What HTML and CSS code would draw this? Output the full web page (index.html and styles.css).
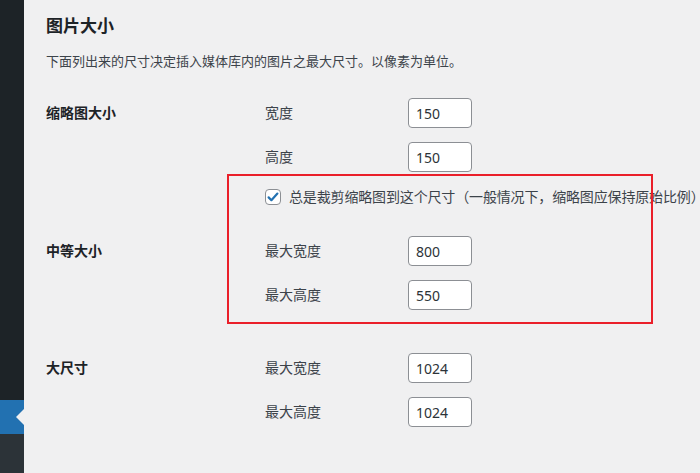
FILE: index.html
```html
<!DOCTYPE html>
<html lang="zh-CN">
<head>
    <meta charset="UTF-8">
    <meta name="viewport" content="width=device-width, initial-scale=1.0">
    <title>媒体设置</title>
    <link rel="stylesheet" href="styles.css">
</head>
<body>
    <div class="admin">
        <nav class="sidebar">
            <div class="menu-top"></div>
            <div class="menu-current"></div>
            <div class="menu-rest"></div>
        </nav>

        <main class="content">
            <h2>图片大小</h2>
            <p class="description">下面列出来的尺寸决定插入媒体库内的图片之最大尺寸。以像素为单位。</p>

            <div class="settings">
                <!-- 缩略图 -->
                <div class="section">
                    <div class="section-title">缩略图大小</div>
                    <div class="fields">
                        <div class="field">
                            <label class="field-label">宽度</label>
                            <input class="small-text" type="text" value="150">
                        </div>
                        <div class="field">
                            <label class="field-label">高度</label>
                            <input class="small-text" type="text" value="150">
                        </div>
                        <label class="check-row">
                            <span class="checkbox">
                                <svg width="14" height="14" viewBox="0 0 14 14">
                                    <path d="M2.6 7.4 L5.4 10.2 L11.4 3.6" fill="none" stroke="#2271b1" stroke-width="2.2" stroke-linecap="round" stroke-linejoin="round"/>
                                </svg>
                            </span>
                            <span class="check-text">总是裁剪缩略图到这个尺寸（一般情况下，缩略图应保持原始比例）</span>
                        </label>
                    </div>
                </div>

                <!-- 中等 -->
                <div class="section section-medium">
                    <div class="section-title">中等大小</div>
                    <div class="fields">
                        <div class="field">
                            <label class="field-label">最大宽度</label>
                            <input class="small-text" type="text" value="800">
                        </div>
                        <div class="field">
                            <label class="field-label">最大高度</label>
                            <input class="small-text" type="text" value="550">
                        </div>
                    </div>
                </div>

                <!-- 大 -->
                <div class="section section-large">
                    <div class="section-title">大尺寸</div>
                    <div class="fields">
                        <div class="field">
                            <label class="field-label">最大宽度</label>
                            <input class="small-text" type="text" value="1024">
                        </div>
                        <div class="field">
                            <label class="field-label">最大高度</label>
                            <input class="small-text" type="text" value="1024">
                        </div>
                    </div>
                </div>
            </div>
        </main>
    </div>

    <div class="highlight"></div>
</body>
</html>
```

FILE: styles.css
```css
html, body {
    margin: 0;
    height: 100%;
    overflow: hidden;
}
body {
    font-family: 'Noto Sans', 'Noto Sans CJK SC', sans-serif;
    background-color: #f0f0f1;
    color: #3c434a;
    position: relative;
}
.admin {
    display: flex;
    min-height: 100vh;
}
.sidebar {
    width: 24px;
    flex-shrink: 0;
    display: flex;
    flex-direction: column;
}
.menu-top {
    height: 400px;
    background-color: #1d2327;
}
.menu-current {
    height: 34px;
    background-color: #2271b1;
    position: relative;
}
.menu-current::after {
    content: '';
    position: absolute;
    right: 0;
    top: 9px;
    border-right: 8px solid #f0f0f1;
    border-top: 8px solid transparent;
    border-bottom: 8px solid transparent;
}
.menu-rest {
    flex-grow: 1;
    background-color: #2c3338;
}
.content {
    flex-grow: 1;
    min-width: 0;
    padding: 15px 0 0 22px;
}
h2 {
    margin: 0;
    font-size: 17px;
    line-height: 22px;
    font-weight: 700;
    color: #1d2327;
}
.description {
    margin: 14px 0 0;
    font-size: 13px;
    line-height: 20px;
    color: #3c434a;
    white-space: nowrap;
}
.settings {
    margin-top: 27px;
    font-size: 14px;
}
.section {
    display: flex;
}
.section-medium {
    margin-top: 31px;
}
.section-large {
    margin-top: 43px;
}
.section-title {
    width: 219px;
    flex-shrink: 0;
    line-height: 30px;
    font-weight: 700;
    color: #1d2327;
}
.fields {
    display: flex;
    flex-direction: column;
    gap: 14px;
}
.field {
    display: flex;
    align-items: center;
    height: 30px;
}
.field-label {
    width: 143px;
    line-height: 30px;
    color: #3c434a;
}
.small-text {
    width: 64px;
    height: 30px;
    box-sizing: border-box;
    margin: 0;
    padding: 0 7px;
    border: 1px solid #8c8f94;
    border-radius: 4px;
    background-color: #fff;
    font-family: 'Noto Sans', sans-serif;
    font-size: 14px;
    color: #2c3338;
}
.check-row {
    display: flex;
    align-items: center;
    gap: 8px;
    margin-top: 3px;
    height: 16px;
    line-height: 16px;
    white-space: nowrap;
    color: #3c434a;
}
.check-text {
    letter-spacing: -0.15px;
}
.checkbox {
    width: 16px;
    height: 16px;
    box-sizing: border-box;
    border: 1px solid #8c8f94;
    border-radius: 4px;
    background-color: #fff;
    display: flex;
    align-items: center;
    justify-content: center;
    flex-shrink: 0;
}
.highlight {
    position: absolute;
    left: 227px;
    top: 174px;
    width: 426px;
    height: 150px;
    box-sizing: border-box;
    border: 2px solid #ea1f2a;
    pointer-events: none;
}
```
